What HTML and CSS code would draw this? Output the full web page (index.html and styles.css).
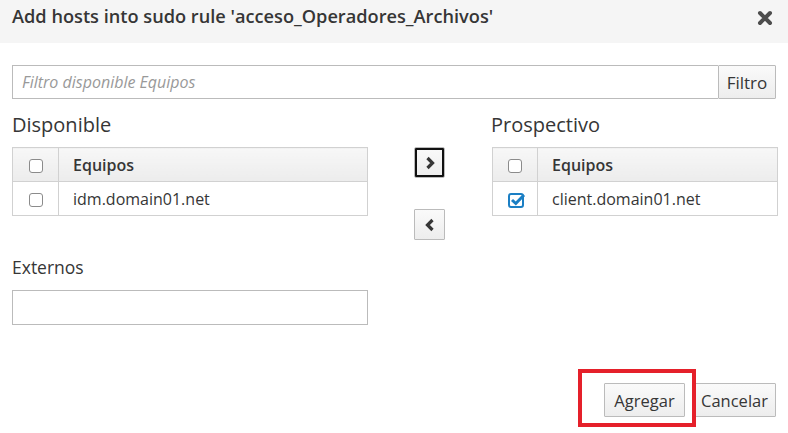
FILE: index.html
```html
<!DOCTYPE html>
<html>
<head>
<meta charset="utf-8">
<link rel="stylesheet" href="styles.css">
</head>
<body>
<div class="dialog">
  <div class="header">
    <h4 class="title">Add hosts into sudo rule 'acceso_Operadores_Archivos'</h4>
    <span class="close"><svg width="16" height="16" viewBox="0 0 16 16"><path d="M3 3 L13 13 M13 3 L3 13" stroke="#4d4d4d" stroke-width="4" stroke-linecap="round"/></svg></span>
  </div>
  <div class="body">
    <div class="filter">
      <input class="filter-input" type="text" placeholder="Filtro disponible Equipos">
      <button class="btn filter-btn">Filtro</button>
    </div>
    <div class="lists">
      <div class="col">
        <div class="col-label">Disponible</div>
        <table class="tbl">
          <tr class="head"><td class="cb"><span class="box"></span></td><td>Equipos</td></tr>
          <tr><td class="cb"><span class="box"></span></td><td>idm.domain01.net</td></tr>
        </table>
      </div>
      <div class="moves">
        <button class="btn move focus"><svg width="12" height="14" viewBox="0 0 12 14"><path d="M3.5 2 L8.5 7 L3.5 12" fill="none" stroke="#363636" stroke-width="3.2"/></svg></button>
        <button class="btn move"><svg width="12" height="14" viewBox="0 0 12 14"><path d="M8.5 2 L3.5 7 L8.5 12" fill="none" stroke="#363636" stroke-width="3.2"/></svg></button>
      </div>
      <div class="col right">
        <div class="col-label">Prospectivo</div>
        <table class="tbl">
          <tr class="head"><td class="cb"><span class="box"></span></td><td>Equipos</td></tr>
          <tr><td class="cb"><svg class="checked" width="18" height="16" viewBox="0 0 18 16"><rect x="1" y="2" width="14" height="13" rx="2" fill="none" stroke="#1b7fc4" stroke-width="2"/><path d="M4 8 L7.8 11.5 L16 3" fill="none" stroke="#1b7fc4" stroke-width="3"/></svg></td><td>client.domain01.net</td></tr>
        </table>
      </div>
    </div>
    <div class="ext-label">Externos</div>
    <input class="ext-input" type="text">
  </div>
  <div class="footer">
    <div class="agregar-wrap">
      <button class="btn foot agregar">Agregar</button>
      <div class="highlight"></div>
    </div>
    <button class="btn foot cancelar">Cancelar</button>
  </div>
</div>
</body>
</html>
```
FILE: styles.css
```css
* { box-sizing: border-box; }
html, body { margin: 0; padding: 0; background: #fff; }
body { font-family: "Open Sans", "Liberation Sans", sans-serif; color: #363636; width: 788px; height: 433px; overflow: hidden; }
.dialog { width: 788px; }
.header { background: #f5f5f5; height: 43px; display: flex; align-items: flex-start; justify-content: space-between; padding: 4px 15px 0 12px; }
.title { margin: 0; font-size: 18.2px; font-weight: 600; color: #363636; line-height: 24px; }
.close { margin-top: 5px; display: block; }
.body { padding: 22px 10px 0 12px; }
.filter { display: flex; height: 34px; margin-right: 2px; }
.filter-input { flex: 1; min-width: 0; height: 34px; border: 1px solid #bbb; border-right: none; font-family: inherit; font-size: 16px; padding: 0 9px; margin: 0; }
.filter-input::placeholder { color: #999; font-style: italic; }
.btn { font-family: inherit; background: linear-gradient(#fafafa, #ededed); border: 1px solid #bbb; border-radius: 1px; color: #363636; cursor: pointer; margin: 0; padding: 0; }
.filter-btn { flex: none; width: 58px; height: 34px; font-size: 17px; }
.lists { display: flex; margin-top: 14px; }
.col { width: 356px; flex: none; }
.col.right { width: 286px; }
.col-label { font-size: 20px; font-weight: 400; line-height: 24px; color: #363636; }
.right .col-label { margin-left: -1px; }
.tbl { border-collapse: collapse; width: 100%; margin-top: 10px; font-size: 16px; }
.tbl td { border: 1px solid #d1d1d1; height: 34px; padding: 0 0 0 14px; line-height: 20px; }
.tbl td.cb { width: 46px; padding: 0; text-align: center; }
.right .tbl td.cb { width: 45px; }
.tbl tr.head td { background: linear-gradient(#f7f7f7, #ececec); font-weight: 600; }
.box { display: inline-block; width: 14px; height: 14px; border: 1px solid #8b8b8b; border-radius: 3px; vertical-align: middle; background: #fff; }
.checked { vertical-align: middle; margin-left: 3px; }
.moves { width: 124px; flex: none; display: flex; flex-direction: column; align-items: flex-start; padding-left: 46px; padding-top: 34px; gap: 31px; }
.move { width: 31px; height: 31px; display: flex; align-items: center; justify-content: center; }
.move.focus { outline: 2px solid #111; outline-offset: -3px; border-radius: 2px; }
.ext-label { font-size: 17.5px; line-height: 22px; margin-top: 16px; color: #363636; }
.ext-input { display: block; width: 356px; height: 35px; border: 1px solid #bbb; margin-top: 12px; }
.footer { display: flex; justify-content: flex-end; align-items: flex-start; padding: 58px 12px 0 0; gap: 8px; }
.agregar-wrap { position: relative; }
.highlight { position: absolute; left: -26px; top: -14px; width: 118px; height: 58px; border: 4px solid #e5202a; pointer-events: none; }
.foot { height: 34px; font-size: 16.5px; display: block; }
.agregar { width: 81px; }
.cancelar { width: 83px; }
```
